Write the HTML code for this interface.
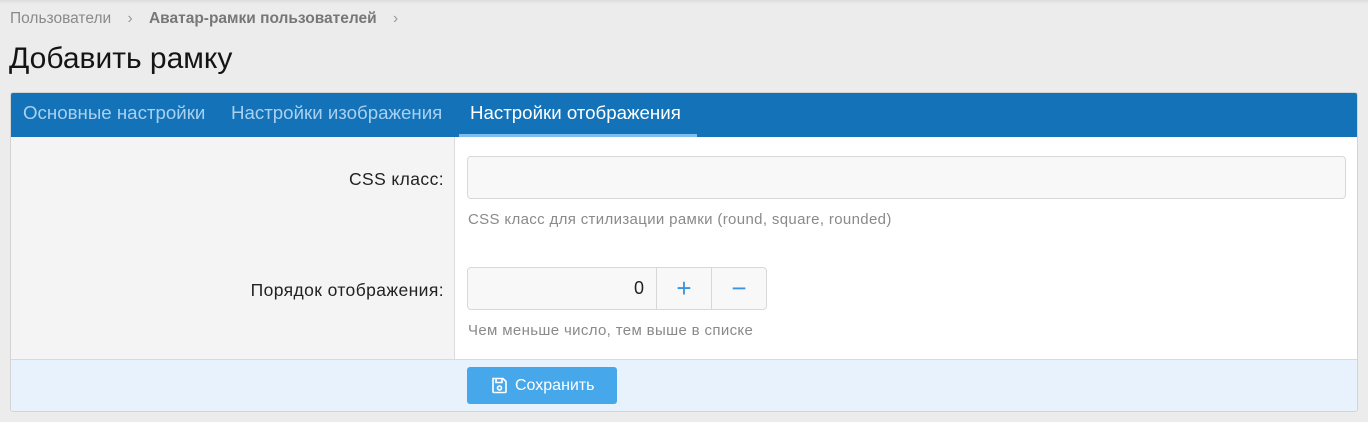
<!DOCTYPE html>
<html><head><meta charset="utf-8"><style>
*{box-sizing:border-box;margin:0;padding:0}
body{width:1368px;height:422px;background:#ececec;font-family:"Liberation Sans","DejaVu Sans",sans-serif;position:relative;overflow:hidden}
.topshade{position:absolute;left:0;top:0;width:1368px;height:4px;background:linear-gradient(#dcdcdc,#ececec)}
.bc{position:absolute;left:10px;top:10px;font-size:15.5px;color:#8a8a8a}
.bc b{color:#777;margin:0 0 0 12px;font-size:15.5px}
.bc .s{margin-left:12px;color:#999}
h1{position:absolute;left:9px;top:42px;font-size:30px;font-weight:normal;color:#141414}
.box{position:absolute;left:10px;top:92px;width:1348px;height:320px;border:1px solid #d3d3d3;border-radius:3px;background:#fff;overflow:hidden}
.tabs{height:44px;background:#1473b8;position:relative}
.tab{position:absolute;top:9px;font-size:18.7px;color:#a9d0ef}
.tab.a{color:#fff}
.ul{position:absolute;left:448px;top:41px;width:238px;height:3px;background:#7dbdf0}
.left{position:absolute;left:0;top:44px;width:444px;height:223px;background:#f4f4f4;border-right:1px solid #dcdcdc}
.lbl{position:absolute;right:913px;font-size:17.5px;letter-spacing:0.4px;color:#222}
.inp{position:absolute;left:456px;top:63px;width:879px;height:43px;border:1px solid #d8d8d8;border-radius:4px;background:#f8f8f8}
.hint{position:absolute;left:457px;font-size:15px;letter-spacing:0.35px;color:#8a8a8a}
.num{position:absolute;left:456px;top:174px;width:300px;height:43px;border:1px solid #d8d8d8;border-radius:4px;background:#f8f8f8}
.num .v{position:absolute;left:0;width:176px;top:10px;text-align:right;font-size:18px;color:#222}
.num .p,.num .m{position:absolute;top:0;height:41px;width:55px;border-left:1px solid #d8d8d8;color:#3b95de;text-align:center;font-size:26px;line-height:40px}
.num .p{left:188px}.num .m{left:243px}
.foot{position:absolute;left:0;top:266px;width:1348px;height:54px;background:#e8f2fc;border-top:1px solid #d3dbe3}
.btn{position:absolute;left:456px;top:7px;width:150px;height:37px;background:#47a7eb;border-radius:3px;color:#fff;font-size:16px;line-height:37px;padding-left:48px}
.btn svg{position:absolute;left:24px;top:10px}
</style></head><body>
<div class="topshade"></div>
<div class="bc">Пользователи <span class="s">›</span> <b>Аватар-рамки пользователей</b> <span class="s">›</span></div>
<h1>Добавить рамку</h1>
<div class="box">
 <div class="tabs">
  <div class="tab" style="left:12px">Основные настройки</div>
  <div class="tab" style="left:220px">Настройки изображения</div>
  <div class="tab a" style="left:459px">Настройки отображения</div>
  <div class="ul"></div>
 </div>
 <div class="left"></div>
 <div class="lbl" style="top:76px">CSS класс:</div>
 <div class="inp"></div>
 <div class="hint" style="top:118px">CSS класс для стилизации рамки (round, square, rounded)</div>
 <div class="lbl" style="top:187px">Порядок отображения:</div>
 <div class="num"><div class="v">0</div><div class="p">+</div><div class="m">−</div></div>
 <div class="hint" style="top:229px">Чем меньше число, тем выше в списке</div>
 <div class="foot"><div class="btn"><svg width="17" height="17" viewBox="0 0 17 17" fill="none" stroke="#fff" stroke-width="1.6"><path d="M2 1.5h10l3 3v10a1 1 0 0 1-1 1H3a1 1 0 0 1-1-1z"/><path d="M5 1.5v4h6v-4"/><circle cx="8.5" cy="11" r="2"/></svg>Сохранить</div></div>
</div>
</body></html>
